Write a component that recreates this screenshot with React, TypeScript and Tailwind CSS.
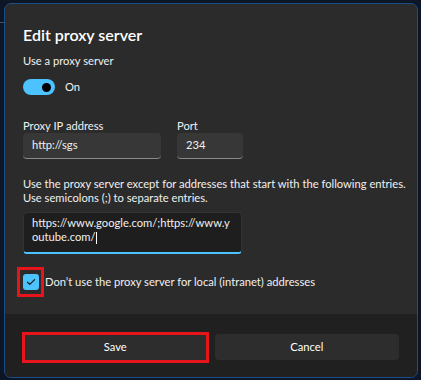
import React from "react";

export default function App() {
  const font = { fontFamily: 'Lato, "Noto Sans", sans-serif' };
  return (
    <div
      className="w-[421px] h-[380px] bg-[#0c1627] pt-[3px] pl-[4px] pr-[3px] pb-[2px] text-white relative overflow-hidden"
      style={font}
    >
      <div className="absolute left-0 top-[22px] w-[4px] h-[1px] bg-[#4a4f58]" />
      <div className="w-full h-full rounded-[7px] border border-[#1d4d85] bg-[#2b2b2b] flex flex-col overflow-hidden">
        <div className="flex-1 flex flex-col pl-[18px] pr-[18px]">
          <div className="mt-[20px] text-[16px] font-semibold leading-[22px] text-white">Edit proxy server</div>
          <div className="mt-[8px] text-[11.2px] leading-[14px] text-[#f0f0f0]">Use a proxy server</div>
          <div className="mt-[11px] flex items-center gap-[10px]">
            <div className="w-[32px] h-[16px] rounded-full bg-[#4cc2ff] flex items-center justify-end pr-[4px]">
              <div className="w-[9px] h-[9px] rounded-full bg-black" />
            </div>
            <span className="text-[11.2px] leading-[14px] text-[#f0f0f0]">On</span>
          </div>
          <div className="mt-[24px] flex gap-[16px]">
            <div className="flex flex-col">
              <div className="text-[11.2px] leading-[14px] text-[#f0f0f0]">Proxy IP address</div>
              <div className="w-[138px] h-[26px] rounded-[4px] bg-[#373737] border-b border-[#8a8a8a] flex items-center pl-[9px] text-[11.2px] text-[#f0f0f0]">
                http://sgs
              </div>
            </div>
            <div className="flex flex-col">
              <div className="text-[11.2px] leading-[14px] text-[#f0f0f0]">Port</div>
              <div className="w-[66px] h-[26px] rounded-[4px] bg-[#373737] border-b border-[#8a8a8a] flex items-center pl-[9px] text-[11.2px] text-[#f0f0f0]">
                234
              </div>
            </div>
          </div>
          <div className="mt-[18px] text-[11.2px] leading-[14px] text-[#f0f0f0] whitespace-nowrap">
            Use the proxy server except for addresses that start with the following entries.
            <br />
            Use semicolons (;) to separate entries.
          </div>
          <div className="mt-[7px] w-[219px] h-[42px] rounded-[4px] bg-[#1e1e1e] border border-[#333] border-b-2 border-b-[#4cc2ff] pl-[8px] pt-[3px] text-[11.2px] leading-[14px] text-[#f0f0f0] whitespace-nowrap">
            https://www.google.com/;https://www.y
            <br />
            outube.com/<span className="inline-block w-[1px] h-[12px] bg-white align-middle ml-[1px]" />
          </div>
          <div className="mt-[13px] flex items-center -ml-[6px]">
            <div className="w-[27px] h-[30px] border-[3px] border-[#e8141c] flex items-center justify-center">
              <div className="w-[16px] h-[16px] rounded-[3px] bg-[#4cc2ff] flex items-center justify-center">
                <svg width="10" height="8" viewBox="0 0 10 8" fill="none">
                  <path d="M1.5 4.2 L3.8 6.4 L8.6 1.6" stroke="#1a1a1a" strokeWidth="1.2" strokeLinecap="round" strokeLinejoin="round" />
                </svg>
              </div>
            </div>
            <span className="ml-[1px] text-[11.2px] leading-[14px] text-[#f0f0f0]">
              Don’t use the proxy server for local (intranet) addresses
            </span>
          </div>
        </div>
        <div className="h-[63px] bg-[#202020] flex items-start gap-[6px] pl-[17px] pr-[18px] pt-[18px]">
          <div className="w-[187px] h-[31px] border-[3px] border-[#e8141c] flex">
            <div className="flex-1 bg-[#2d2d2d] flex items-center justify-center text-[11.2px] text-white">Save</div>
          </div>
          <div className="mt-[2px] w-[185px] h-[26px] rounded-[4px] bg-[#2d2d2d] flex items-center justify-center text-[11.2px] text-white">
            Cancel
          </div>
        </div>
      </div>
    </div>
  );
}
